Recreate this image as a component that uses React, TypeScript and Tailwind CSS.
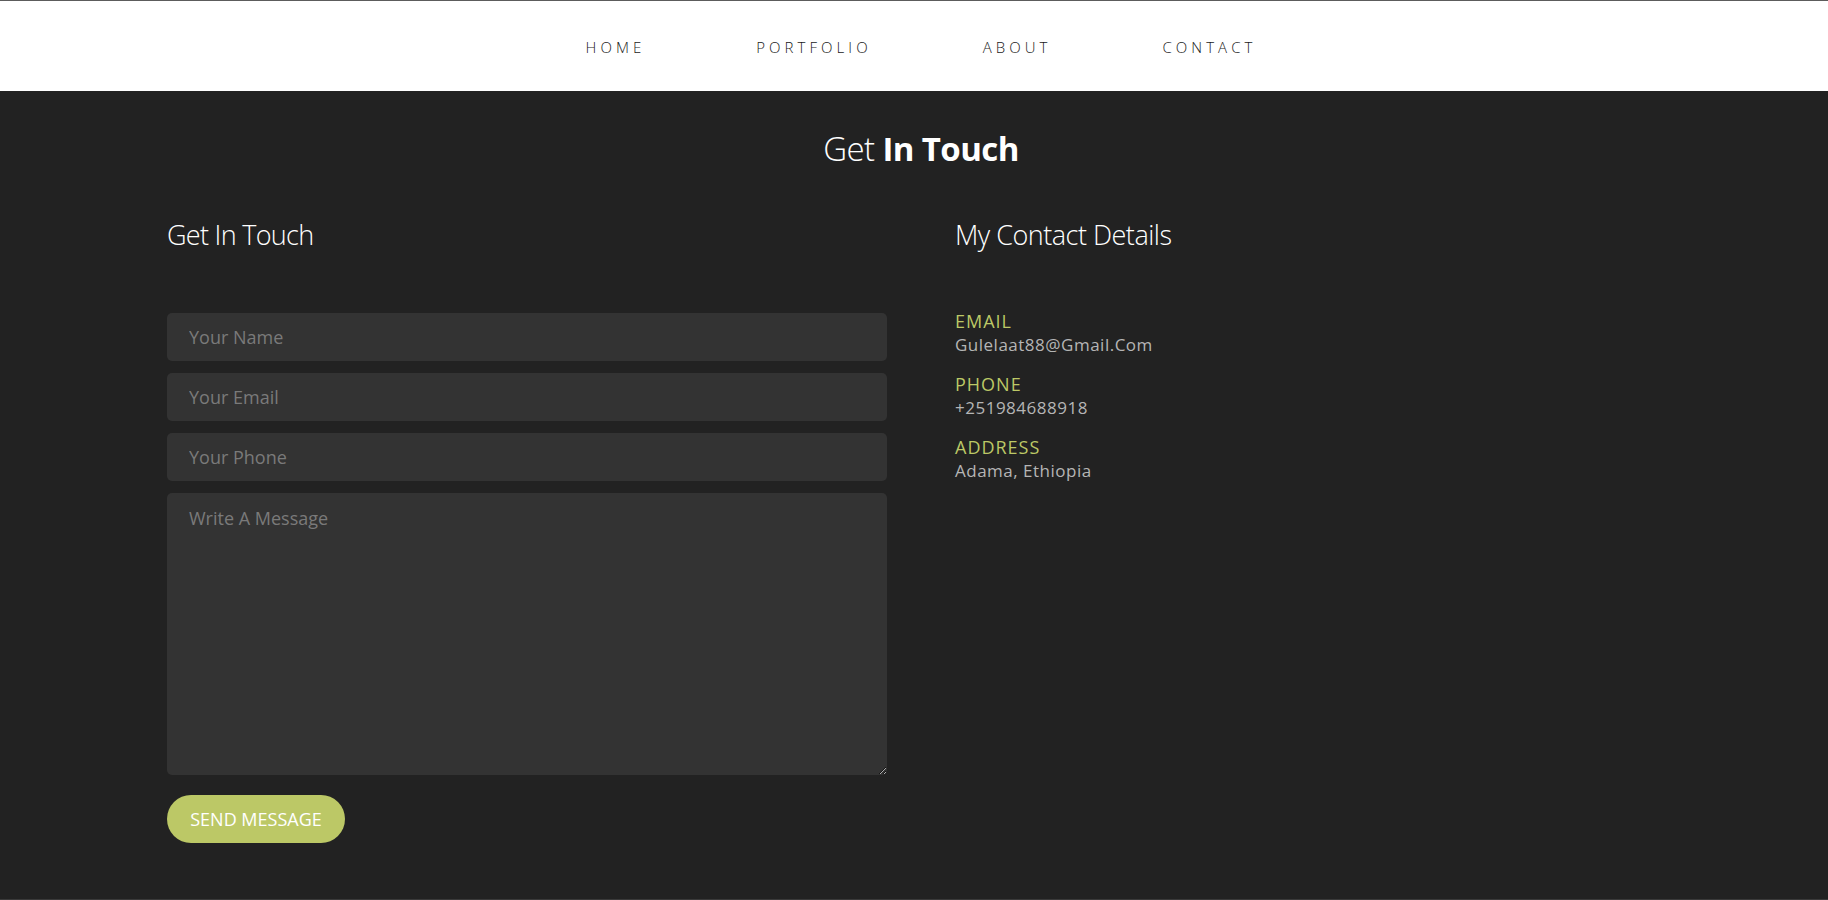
import React from 'react';

const NAV = ['Home', 'Portfolio', 'About', 'Contact'];

const DETAILS = [
  { label: 'Email', value: 'Gulelaat88@Gmail.Com' },
  { label: 'Phone', value: '+251984688918' },
  { label: 'Address', value: 'Adama, Ethiopia' },
];

const inputCls =
  'w-full h-12 rounded-[5px] bg-[#333333] px-[22px] text-[18px] text-[#dddddd] placeholder:text-[#7a7a7a] outline-none';

export default function App() {
  return (
    <div className="min-h-screen bg-[#222222]" style={{ fontFamily: '"Open Sans", "Noto Sans", sans-serif' }}>
      {/* top nav */}
      <header className="h-[91px] bg-white border-t border-[#5c5c5c] pl-[167px] pr-[153px] flex items-center justify-center">
        <ul className="flex gap-[111px] pt-[2px]">
          {NAV.map((item) => (
            <li key={item}>
              <a href="#" className="uppercase text-[15px] font-light tracking-[0.27em] text-[#1a1a1a]">
                {item}
              </a>
            </li>
          ))}
        </ul>
      </header>

      <main className="h-[808px] pl-[167px] pr-[153px] pt-[38px] text-white">
        <h2 className="text-center text-[33px] leading-[40px] font-light tracking-[-0.6px]">
          Get <span className="font-bold">In Touch</span>
        </h2>

        <div className="flex gap-[68px] mt-[49px]">
          {/* form */}
          <div className="w-[720px]">
            <h3 className="text-[27px] leading-[34px] font-light tracking-[-0.7px]">Get In Touch</h3>
            <form className="mt-[61px] flex flex-col gap-3" onSubmit={(e) => e.preventDefault()}>
              <input type="text" placeholder="Your Name" className={inputCls} />
              <input type="email" placeholder="Your Email" className={inputCls} />
              <input type="tel" placeholder="Your Phone" className={inputCls} />
              <textarea
                placeholder="Write A Message"
                className="w-full h-[282px] rounded-[5px] bg-[#333333] px-[22px] py-3 text-[18px] leading-[27px] text-[#dddddd] placeholder:text-[#7a7a7a] outline-none"
              />
              <div className="pt-2">
                <button
                  type="submit"
                  className="h-12 w-[178px] rounded-full bg-[#bcc866] text-white text-[18px] uppercase"
                >
                  Send Message
                </button>
              </div>
            </form>
          </div>

          {/* contact details */}
          <div>
            <h3 className="text-[27px] leading-[34px] font-light tracking-[-0.5px]">My Contact Details</h3>
            <ul className="mt-[58px] flex flex-col gap-[17px]">
              {DETAILS.map((d) => (
                <li key={d.label}>
                  <div className="uppercase text-[18px] leading-[23px] tracking-[1px] text-[#bcc866]">{d.label}</div>
                  <div className="text-[17px] leading-[23px] tracking-[0.5px] text-[#b5b5b5]">{d.value}</div>
                </li>
              ))}
            </ul>
          </div>
        </div>
      </main>
      <div className="h-px bg-[#3a3a3a]" />
    </div>
  );
}
